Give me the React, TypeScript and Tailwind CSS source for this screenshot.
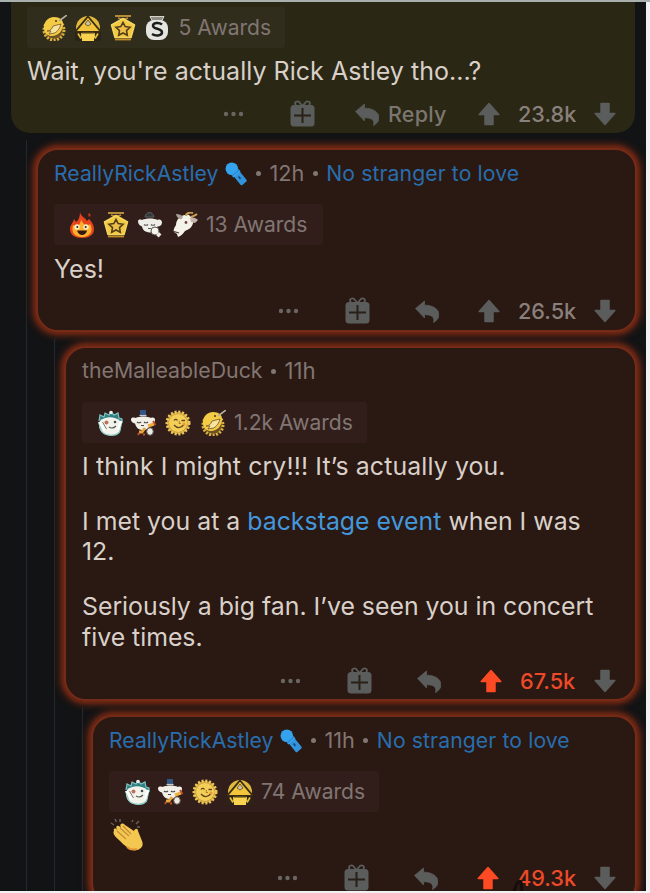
import type { ReactNode } from "react";

type AwardName = "narwhal" | "hut" | "star" | "silver" | "fire" | "cup" | "goat" | "snow" | "chef" | "sun";

function Narwhal() {
  return (
    <>
      <circle cx="13" cy="15" r="10" fill="#6d5221" stroke="#dcb244" strokeWidth="3" strokeDasharray="2 1.500" />
      <path d="M3 14C2 7 7 2 13 2c6 0 9 3 9 7 0 7-5 12-11 12-4 0-7-2-8-7z" fill="#f4cb45" />
      <path d="M6 16c3 0 5-2 6-5l4-1 4-1c-1 4-3 7-6 9l-6 1 2-3z" fill="#f7e3a0" stroke="#80622a" strokeWidth=".9" />
      <path d="M18 6l8-6" stroke="#b9b09a" strokeWidth="1.600" />
      <circle cx="15" cy="6" r="1" fill="#4b3517" />
    </>
  );
}

function Hut() {
  return (
    <>
      <circle cx="13" cy="13" r="12" fill="#e2b93f" />
      <path d="M13 1.500L26 17H0z" fill="#f2c53c" stroke="#3a2d12" strokeWidth="1.800" />
      <path d="M0 17.500h6V26H0zM20 17.500h6V26h-6z" fill="#2b2315" />
      <path d="M3 18.500l3 5M23 18.500l-3 5" stroke="#e2b93f" strokeWidth="1.800" />
      <path d="M7 18h12v8H7z" fill="#fbd250" />
      <path d="M7 18h12" stroke="#6b5520" strokeWidth="1.200" />
      <path d="M13 5l3 4-3 2-3-2z" fill="#c6c2ae" stroke="#6b5520" strokeWidth=".9" />
    </>
  );
}

function Star() {
  return (
    <>
      <path d="M5 1h16M8 3l5 1.500L18 3" fill="none" stroke="#b48d38" strokeWidth="1.800" />
      <path d="M13 3.500L24.500 10 21 22.500H5L1.500 10z" fill="#f1c942" stroke="#f5d660" strokeWidth="1.500" strokeLinejoin="round" />
      <path d="M5 24.500h16" stroke="#c18b25" strokeWidth="1.800" />
      <path d="M13 7.500l2.200 4.100 4.800.7-3.500 3.300.8 4.600-4.300-2.200-4.300 2.200.8-4.600L6 12.300l4.800-.7z" fill="#edc04a" stroke="#543d18" strokeWidth="1.600" />
    </>
  );
}

function Silver() {
  return (
    <>
      <path d="M6 1.500h14l-2 4H8z" fill="#8f8d86" stroke="#d5d2ca" />
      <rect x="2" y="5" width="22" height="20" rx="8" fill="#e6e4e1" />
      <path d="M18 9.500c-3-2.500-9-2-9 1.200 0 3.600 9 2.600 9 6.600 0 3.700-6.500 4-10 1.700" fill="none" stroke="#1b1f1b" strokeWidth="2.500" />
    </>
  );
}

function Fire() {
  return (
    <>
      <path d="M11 0c1 5 5 5 7 9l2-2c3 3 5 6 5 10 0 6-5 9-12 9S1 23 1 17c0-4 3-6 4-10l2 3c3-2 4-6 4-10z" fill="#e8431b" />
      <path d="M12 7c1 4 4 5 5 8l4-3c4 7 0 13-8 13S2 20 4 13l4 2c2-2 4-4 4-8z" fill="#ffb02c" />
      <circle cx="8" cy="15" r="2.700" fill="#fff0c0" />
      <circle cx="17" cy="15" r="2.700" fill="#fff0c0" />
      <circle cx="8.300" cy="15" r="1" fill="#29201d" />
      <circle cx="16.700" cy="15" r="1" fill="#29201d" />
      <path d="M8 18.500h10c-1 5.500-8 6.500-10 0z" fill="#351712" />
      <path d="M20 1.500l.8 3" stroke="#bf3517" strokeWidth="2" />
    </>
  );
}

function Cup() {
  return (
    <>
      <path d="M8 5c1-6 8-6 9 0z" fill="#343839" stroke="#596063" />
      <path d="M1 9.500c0-2 2-2.500 4-1.500C9 6 17 6 20.500 8c2-1 4.500 0 4.500 2.500 0 2.500-2 4-4.500 4C19 18.500 16 21 12 20.500 8 20 5.500 18 5 14.500 3 14 1 12 1 9.500z" fill="#efede7" />
      <path d="M7 12.500c1 1 3 1 4 0M14 12.500c1 1 3 1 4 0M11 16.500h3" fill="none" stroke="#5c5a5a" strokeWidth="1.100" />
      <circle cx="18" cy="19" r="4" fill="#f8f5ed" stroke="#555" />
      <path d="M20.500 21.500l2.500 2.500" stroke="#eeeae2" strokeWidth="4" />
    </>
  );
}

function Goat() {
  return (
    <>
      <path d="M7 6c3-3 7-4 10-3l4 4c1 4-1 8-4 10l-4 2c-2 3-4 5-7 6l-1-3-3-2c-1-3 1-5 2-7 0-3 1-5 3-7z" fill="#f5f2e9" />
      <path d="M14 4c0-3 4-4 7-3M19 5c2-1 4-1 6-3" fill="none" stroke="#c99d54" strokeWidth="2" />
      <path d="M18 6c3-1 6 0 8 2l-3 3-4-1z" fill="#c6b3a9" />
      <path d="M4 2c3 0 6 1 7 3L9 7.500C6 6.500 4 4 4 2z" fill="#aaa19b" />
      <circle cx="14" cy="10.500" r="1.400" fill="#6b4441" />
      <path d="M2 19.500l5 1.500" stroke="#463c38" strokeWidth="1.300" />
    </>
  );
}

function Snow() {
  return (
    <>
      <path d="M2 11l1-6 4 2 1-4 4 2 2-3 3 3 4-2 1 5 3 1v4" fill="#317f80" stroke="#7fc4c0" strokeWidth="1.200" />
      <path d="M3 11c5-5 15-5 20 0 3 7 0 14.500-9 14.500S0 19 3 11z" fill="#f3f3eb" />
      <path d="M1.500 12l3 9c3 5 14 6 18 1l2.500-11" fill="none" stroke="#8ccbc3" strokeWidth="1.300" />
      <path d="M2.500 12l5 8.500M24 11l-3 9" stroke="#fff" strokeWidth="2.400" />
      <path d="M5.500 12l4 7" stroke="#66706f" strokeWidth=".9" />
      <circle cx="9.500" cy="12.500" r="2" fill="#bd705d" />
      <circle cx="18" cy="12" r="1.300" fill="#454a4b" />
      <path d="M12 17c3 2 5 1 7-1" fill="none" stroke="#555" strokeWidth="1.100" />
      <circle cx="14" cy="2.500" r="1.800" fill="#e7f2ec" />
    </>
  );
}

function Chef() {
  return (
    <>
      <path d="M9 0h6v5.500H9z" fill="#315684" />
      <path d="M8.500 5.500h7" stroke="#c4cbd2" strokeWidth="1.200" />
      <path d="M0 9.500c0-2 2.500-2.500 4.500-1.500C9 6 16 6 20 8c2-1 4.500 0 4 2.500-.5 2-2 3.500-4 3.500-2 4.500-5 6.500-9 6-4-.5-6-3-7-6.500C1.500 13 0 11.500 0 9.500z" fill="#f2efe6" />
      <path d="M6 12c1 1 3 1 4 0M13 12c1 1 3 1 4 0M10 15.500h3" fill="none" stroke="#484748" strokeWidth="1.100" />
      <path d="M17 16l6-2" stroke="#eeb13f" strokeWidth="3" />
      <path d="M8 22l3 0 3-4" fill="none" stroke="#e7a53c" strokeWidth="2.800" />
      <path d="M22 11l2.500 4M8 23l-1 2M12 24.500h2" fill="none" stroke="#c94d29" strokeWidth="1.800" />
      <ellipse cx="19" cy="21.500" rx="3.300" ry="3.800" fill="#eceae3" stroke="#5e514a" />
    </>
  );
}

function Sun() {
  return (
    <>
      <circle cx="13" cy="13" r="11" fill="#c99d38" stroke="#ebc65c" strokeWidth="3" strokeDasharray="2 1.700" />
      <circle cx="13" cy="13" r="9" fill="#f4cf58" />
      <path d="M9 10.500c1-1.500 2.500-1.500 3.500 0M16.500 10.500h3.500M9 15c3 3.500 7 3.500 10-.500" fill="none" stroke="#64451c" strokeWidth="1.300" />
      <path d="M14.500 11l-.500 2.500h2" fill="none" stroke="#ad8028" />
      <circle cx="19" cy="14" r="1.500" fill="#e9983a" />
    </>
  );
}

const AWARDS: Record<AwardName, () => ReactNode> = {
  narwhal: Narwhal, hut: Hut, star: Star, silver: Silver, fire: Fire,
  cup: Cup, goat: Goat, snow: Snow, chef: Chef, sun: Sun,
};

function Awards({ names, label, olive = false, className }: { names: AwardName[]; label: string; olive?: boolean; className: string }) {
  return (
    <div className={`flex h-[41px] shrink-0 items-center rounded-[3px] ${olive ? "bg-[#302d1d] pl-[14px]" : "bg-[#311e1b] pl-[14.500px]"} ${className}`}>
      <div className="flex w-[137.500px] shrink-0 gap-[8.400px]">
        {names.map((name) => {
          const Art = AWARDS[name];
          return (
            <svg key={name} viewBox="0 0 26 26" className="size-[26px] shrink-0">
              <Art />
            </svg>
          );
        })}
      </div>
      <span className="whitespace-nowrap text-[21.100px] text-[#817672]">{label}</span>
    </div>
  );
}

function Dots() {
  return (
    <svg viewBox="0 0 21 6" className="h-[6px] w-[21px] shrink-0" fill="#6a6662">
      <circle cx="3" cy="3" r="2.200" />
      <circle cx="10.500" cy="3" r="2.200" />
      <circle cx="18" cy="3" r="2.200" />
    </svg>
  );
}

function Gift() {
  return (
    <svg viewBox="0 0 25 27" className="mb-[2px] h-[27px] w-[25px] shrink-0">
      <path d="M6 5.500C3 2 8 0 10 3l2.500 3L15 3c2-3 7-1 4 2.500" fill="none" stroke="#5b5d5c" strokeWidth="1.800" />
      <rect x=".5" y="5" width="24" height="21.500" rx="3.500" fill="#5b5d5c" />
      <path d="M12.500 8v15M4 15.500h17" stroke="#292019" strokeWidth="2" />
    </svg>
  );
}

function ReplyArrow() {
  return (
    <svg viewBox="0 0 24 23" className="h-[23px] w-[24px] shrink-0">
      <path d="M.5 8.500L9.500 1v4.200C18 5 24 9.500 24 14.500c0 3.500-2 6-5.500 8 1.500-5-1.500-8-9-7.800v3.300z" fill="#5b5d5c" stroke="#5b5d5c" strokeWidth=".8" strokeLinejoin="round" />
    </svg>
  );
}

function Vote({ down = false, hot = false }: { down?: boolean; hot?: boolean }) {
  return (
    <svg viewBox="0 0 22 24" className={`h-[24px] w-[22px] shrink-0 ${down ? "rotate-180" : ""}`}>
      <path
        d="M11 1.500L20.800 12.500H15v10H7v-10H1.200z"
        fill={hot ? "#fc4b24" : "#5b5d5c"}
        stroke={hot ? "#fc4b24" : "#5b5d5c"}
        strokeWidth="1.500"
        strokeLinejoin="round"
      />
    </svg>
  );
}

function Actions({ score, scoreWidth, hot = false, reply = false }: { score: string; scoreWidth: string; hot?: boolean; reply?: boolean }) {
  return (
    <div className="flex h-[36px] shrink-0 items-center justify-end">
      <Dots />
      <div className="ml-[46px] flex"><Gift /></div>
      <div className={reply ? "ml-[40px] mr-[33px] flex items-center gap-[9px]" : "ml-[45px] mr-[39px] flex items-center"}>
        <ReplyArrow />
        {reply && <span className="w-[57px] whitespace-nowrap text-[21.500px] font-medium tracking-[0.200px] text-[#7b7670]">Reply</span>}
      </div>
      <Vote hot={hot} />
      <span className={`ml-[18px] mr-[18px] whitespace-nowrap text-[21.700px] font-medium ${scoreWidth} ${hot ? "text-[#ed4a29]" : "text-[#89807c]"}`}>{score}</span>
      <Vote down />
    </div>
  );
}

function Microphone() {
  return (
    <svg viewBox="0 0 22 24" className="ml-[7px] h-[24px] w-[22px] shrink-0">
      <path d="M10 14L14 10.500L20.500 18.500L16.500 22z" fill="#3294dc" stroke="#3294dc" strokeWidth="2.500" strokeLinejoin="round" />
      <circle cx="6.800" cy="6.800" r="6.300" fill="#35a2ee" />
      <path d="M6.500 13.500L13.500 7l2 2.500-7 6z" fill="#35a2ee" />
      <path d="M7 14l7-6" stroke="#2876ad" strokeWidth=".9" />
      <path d="M13.500 14.500l2 2.300" stroke="#174d77" strokeWidth="1.800" />
    </svg>
  );
}

function Bullet() {
  return <span className="mx-[8.500px] size-[5px] shrink-0 rounded-full bg-[#817672]" />;
}

function RickHeader({ age }: { age: string }) {
  return (
    <div className="flex h-[47px] shrink-0 items-center whitespace-nowrap text-[21.200px] text-[#817672]">
      <span className="text-[#286eae]">ReallyRickAstley</span>
      <Microphone />
      <Bullet />
      <span className="text-[21.700px]">{age}</span>
      <Bullet />
      <span className="tracking-[0.100px] text-[#286eae]">No stranger to love</span>
    </div>
  );
}

function Card({ className, children }: { className: string; children: ReactNode }) {
  return (
    <article className={`mr-[9px] flex flex-col rounded-[22px] border-2 border-[#752b18] bg-[#2a1812] pl-[16px] pr-[19px] shadow-[0_0_7px_4px_#6a2614,0_0_3px_2px_#6d2714] ${className}`}>
      {children}
    </article>
  );
}

function Clap() {
  return (
    <svg viewBox="0 0 34 34" className="mt-[6px] h-[34px] w-[34px] shrink-0">
      <path d="M2 5l3 2M6 1l1.500 3M11 1v3M23 4l1-2M27 6l3-3M28 9h3" stroke="#67605a" strokeWidth="1.500" />
      <path d="M5 13c-1-3 2-3 3-1l1 1c-4-5 0-7 3-3-2-4 1-6 4-3l9 6c1-3 4-3 4 0l4 10c2 5-1 8-5 9-7 1-12-4-18-10-3-3-7-6-5-9z" fill="#f4c850" />
      <path d="M8 13l9 8M11 10l9 8M14 8l8 8" fill="none" stroke="#c48a38" strokeWidth="1.100" />
      <path d="M18 29c3 3 6 3 10 2" fill="none" stroke="#e69737" strokeWidth="2" />
    </svg>
  );
}

export default function App() {
  return (
    <div className="relative h-[893px] w-[650px] overflow-hidden bg-[#f1f1f1] pt-[2px] shadow-[inset_0_2px_0_#a9b1af] [font-family:Inter,'Liberation_Sans',sans-serif]">
      <main className="h-[889px] w-[646px] overflow-hidden bg-[#121315]">
        <article className="ml-[11px] mr-[11px] flex h-[131px] flex-col rounded-b-[19px] bg-[#2a2714] pl-[16px] pr-[19px] pt-[5px]">
          <Awards names={["narwhal", "hut", "star", "silver"]} label="5 Awards" olive className="w-[258px]" />
          <p className="mt-[8px] h-[31px] whitespace-nowrap text-[25px] leading-[31px] tracking-[0.030px] text-[#d8d0c9]">Wait, you're actually Rick Astley tho...?</p>
          <div className="mt-[9px]">
            <Actions score="23.8k" scoreWidth="w-[58px]" reply />
          </div>
        </article>

        <section className="ml-[26px] mt-[7px] border-l border-[#26272a]">
          <div className="pt-[8px]">
            <Card className="ml-[9px] h-[184px]">
              <RickHeader age="12h" />
              <Awards names={["fire", "star", "cup", "goat"]} label="13 Awards" className="mt-[7px] w-[269px]" />
              <p className="mt-[9px] h-[31px] text-[25px] leading-[31px] text-[#d8d0c9]">Yes!</p>
              <div className="mt-[8px]"><Actions score="26.5k" scoreWidth="w-[58px]" /></div>
            </Card>
          </div>

          <div className="ml-[27px] mt-[6px] border-l border-[#26272a] pt-[8px]">
            <Card className="ml-[9px] h-[355px]">
              <div className="flex h-[46px] shrink-0 items-center whitespace-nowrap text-[21.300px] text-[#817672]">
                <span>theMalleableDuck</span>
                <Bullet />
                <span className="text-[22.200px]">11h</span>
              </div>
              <Awards names={["snow", "chef", "sun", "narwhal"]} label="1.2k Awards" className="mt-[8px] w-[285px]" />
              <div className="mt-[8px] whitespace-nowrap text-[24.850px] leading-[30.500px] text-[#d8d0c9]">
                <p className="tracking-[0.120px]">I think I might cry!!! It’s actually you.</p>
                <p className="mt-[24px] tracking-[0.010px]">I met you at a <span className="text-[#4397dc]">backstage event</span> when I was<br />12.</p>
                <p className="mt-[24.500px] tracking-[-0.020px]">Seriously a big fan. I’ve seen you in concert<br />five times.</p>
              </div>
              <div className="mt-[11px]"><Actions score="67.5k" scoreWidth="w-[56px]" hot /></div>
            </Card>

            <div className="ml-[27px] mt-[6px] border-l border-[#26272a] pt-[8px]">
              <Card className="ml-[8px] h-[190px]">
                <RickHeader age="11h" />
                <Awards names={["snow", "chef", "sun", "hut"]} label="74 Awards" className="mt-[7px] w-[270px]" />
                <Clap />
                <div className="mt-[8px]"><Actions score="49.3k" scoreWidth="w-[59px]" hot /></div>
              </Card>
            </div>
          </div>
        </section>
      </main>
      <svg viewBox="0 0 12 12" className="absolute left-[512px] top-[879px] size-[12px]">
        <path d="M2 12c2-5 4-12 7-9l1 9" fill="none" stroke="#160e0b" strokeWidth="3" />
      </svg>
    </div>
  );
}
